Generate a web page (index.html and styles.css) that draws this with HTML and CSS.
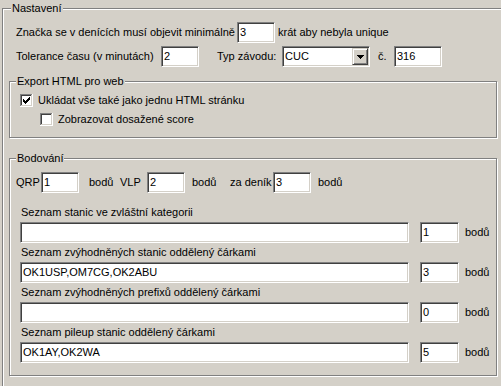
FILE: index.html
```html
<!DOCTYPE html>
<html lang="cs">
<head>
<meta charset="utf-8">
<title>Nastavení</title>
<link rel="stylesheet" href="styles.css">
</head>
<body>
<div class="group main">
  <span class="gtitle t-main">Nastavení</span>

  <div class="row top-row">
    <span class="lbl w-zn">Značka se v denících musí objevit minimálně</span>
    <div class="field w37">3</div>
    <span class="lbl after">krát aby nebyla unique</span>
  </div>

  <div class="row top-row r2">
    <span class="lbl w-tol">Tolerance času (v minutách)</span>
    <div class="field w38">2</div>
    <span class="lbl typ">Typ závodu:</span>
    <div class="field combo">
      <span class="combo-text">CUC</span>
      <span class="combo-btn">
        <svg width="7" height="4" viewBox="0 0 7 4" shape-rendering="crispEdges"><path d="M0 0h7v1H0zM1 1h5v1H1zM2 2h3v1H2zM3 3h1v1H3z" fill="#000"/></svg>
      </span>
    </div>
    <span class="lbl cis">č.</span>
    <div class="field w48">316</div>
  </div>

  <div class="group export">
    <span class="gtitle t-sub">Export HTML pro web</span>
    <div class="check-row">
      <svg class="cb" width="13" height="13" viewBox="0 0 13 13" shape-rendering="crispEdges">
        <path d="M0 0h12v1H1v11H0z" fill="#808080"/>
        <path d="M1 1h10v1H2v9H1z" fill="#404040"/>
        <path d="M12 0h1v13H0v-1h12z" fill="#fff"/>
        <path d="M11 1h1v11H1v-1h10z" fill="#d4d0c8"/>
        <rect x="2" y="2" width="9" height="9" fill="#fff"/>
        <path d="M3 5h1v3h-1zM4 6h1v3h-1zM5 7h1v3h-1zM6 6h1v3h-1zM7 5h1v3h-1zM8 4h1v3h-1zM9 3h1v3h-1z" fill="#000"/>
      </svg>
      <span class="cb-text">Ukládat vše také jako jednu HTML stránku</span>
    </div>
    <div class="check-row sub">
      <svg class="cb" width="13" height="13" viewBox="0 0 13 13" shape-rendering="crispEdges">
        <path d="M0 0h12v1H1v11H0z" fill="#808080"/>
        <path d="M1 1h10v1H2v9H1z" fill="#404040"/>
        <path d="M12 0h1v13H0v-1h12z" fill="#fff"/>
        <path d="M11 1h1v11H1v-1h10z" fill="#d4d0c8"/>
        <rect x="2" y="2" width="9" height="9" fill="#fff"/>
      </svg>
      <span class="cb-text">Zobrazovat dosažené score</span>
    </div>
  </div>

  <div class="group score">
    <span class="gtitle t-sub">Bodování</span>
    <div class="row">
      <span class="lbl w-qrp">QRP</span>
      <div class="field w38">1</div>
      <span class="lbl w-bod1">bodů</span>
      <span class="lbl w-vlp">VLP</span>
      <div class="field w38">2</div>
      <span class="lbl w-bod2">bodů</span>
      <span class="lbl w-den">za deník</span>
      <div class="field w38">3</div>
      <span class="lbl after7">bodů</span>
    </div>

    <div class="list">
      <div class="item">
        <div class="item-label">Seznam stanic ve zvláštní kategorii</div>
        <div class="row item-row">
          <div class="field wide"></div>
          <div class="field small">1</div>
          <span class="lbl after6">bodů</span>
        </div>
      </div>
      <div class="item">
        <div class="item-label">Seznam zvýhodněných stanic oddělený čárkami</div>
        <div class="row item-row">
          <div class="field wide">OK1USP,OM7CG,OK2ABU</div>
          <div class="field small">3</div>
          <span class="lbl after6">bodů</span>
        </div>
      </div>
      <div class="item">
        <div class="item-label">Seznam zvýhodněných prefixů oddělený čárkami</div>
        <div class="row item-row">
          <div class="field wide"></div>
          <div class="field small">0</div>
          <span class="lbl after6">bodů</span>
        </div>
      </div>
      <div class="item">
        <div class="item-label">Seznam pileup stanic oddělený čárkami</div>
        <div class="row item-row">
          <div class="field wide">OK1AY,OK2WA</div>
          <div class="field small">5</div>
          <span class="lbl after6">bodů</span>
        </div>
      </div>
    </div>
  </div>
</div>
</body>
</html>
```

FILE: styles.css
```css
html, body {
  margin: 0;
  padding: 0;
}

body {
  width: 501px;
  height: 386px;
  overflow: hidden;
  background: #d4d0c8;
  color: #000;
  font-family: "Liberation Sans", Arial, sans-serif;
  font-size: 11px;
  line-height: 13px;
}

.group {
  position: relative;
  box-sizing: border-box;
  border: 1px solid #808080;
  box-shadow: inset 1px 1px 0 #fff, 1px 1px 0 #fff;
}

.gtitle {
  position: absolute;
  top: -7px;
  background: #d4d0c8;
  line-height: 13px;
  white-space: nowrap;
  padding: 0 1px;
}

.t-main { left: 8px; }
.t-sub { left: 6px; }

.main {
  margin: 8px 0 0 2px;
  width: 499px;
  height: 378px;
  border-right: none;
  border-bottom: none;
  box-shadow: inset 1px 1px 0 #fff;
  padding: 13px 0 0 6px;
}

.row {
  display: flex;
  align-items: center;
  height: 21px;
}

.top-row { padding-left: 7px; }
.r2 { margin-top: 3px; }

.lbl { white-space: nowrap; flex: none; }
.w-zn { width: 221px; }
.after { margin-left: 3px; }
.w-tol { width: 145px; }
.typ { margin-left: 18px; width: 65px; }
.cis { margin-left: 8px; width: 16px; }

.field {
  flex: none;
  box-sizing: border-box;
  height: 21px;
  background: #fff;
  border: 1px solid;
  border-color: #808080 #fff #fff #808080;
  box-shadow: inset 1px 1px 0 #404040, inset -1px -1px 0 #d4d0c8;
  padding: 0 2px;
  display: flex;
  align-items: center;
  white-space: nowrap;
  overflow: hidden;
}

.w37 { width: 38px; }
.w38 { width: 38px; }
.w48 { width: 48px; }

.combo {
  width: 88px;
  padding: 1px 1px 1px 2px;
}
.combo-text { flex: 1; }
.combo-btn {
  box-sizing: border-box;
  width: 16px;
  height: 17px;
  background: #d4d0c8;
  border: 1px solid;
  border-color: #d4d0c8 #404040 #404040 #d4d0c8;
  box-shadow: inset 1px 1px 0 #fff, inset -1px -1px 0 #808080;
  display: flex;
  align-items: center;
  justify-content: center;
}

.export {
  width: 488px;
  height: 57px;
  margin-top: 14px;
  padding: 12px 0 0 10px;
}

.check-row {
  display: flex;
  align-items: center;
  height: 13px;
}
.check-row.sub {
  margin-top: 6px;
  margin-left: 20px;
}
.cb { flex: none; display: block; }
.cb-text { margin-left: 5px; white-space: nowrap; }

.score {
  width: 488px;
  height: 218px;
  margin-top: 20px;
  padding: 13px 0 0 6px;
}

.w-qrp { width: 25px; }
.w-bod1 { margin-left: 10px; width: 31px; }
.w-vlp { width: 27px; }
.w-bod2 { margin-left: 7px; width: 38px; }
.w-den { width: 43px; }
.after7 { margin-left: 7px; }

.list {
  margin-top: 13px;
  padding-left: 4px;
}
.item + .item { margin-top: 3px; }
.item-label {
  margin-left: 1px;
  height: 13px;
  white-space: nowrap;
}
.item-row { margin-top: 3px; }
.wide { width: 389px; }
.small { width: 39px; margin-left: 11px; }
.after6 { margin-left: 6px; }
```
